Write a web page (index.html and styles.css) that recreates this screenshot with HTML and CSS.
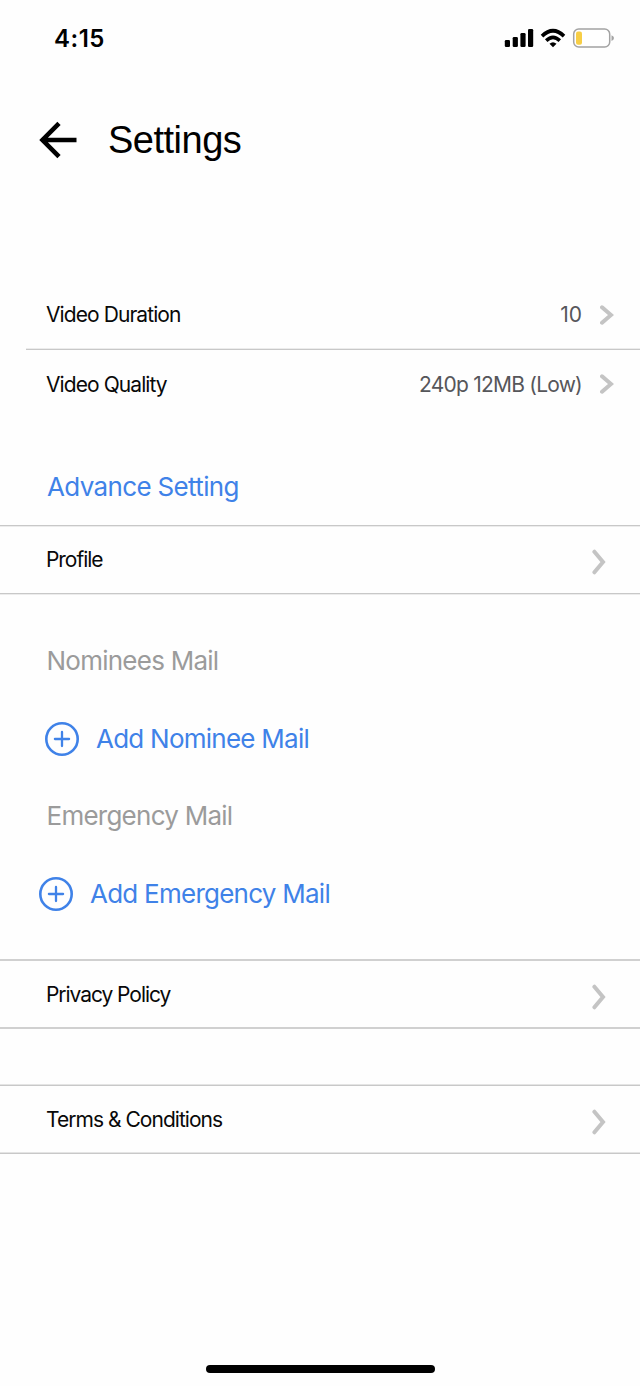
FILE: index.html
```html
<!DOCTYPE html>
<html lang="en">
<head>
<meta charset="utf-8">
<title>Settings</title>
<link rel="stylesheet" href="styles.css">
</head>
<body>
<div class="screen">
  <div class="status">
    <span class="time">4:15</span>
    <svg class="status-icons" width="112" height="24" viewBox="0 0 112 24">
      <rect x="0.8" y="13" width="5.2" height="7" rx="1.3"/>
      <rect x="8.7" y="10" width="5.2" height="10" rx="1.3"/>
      <rect x="16.4" y="6" width="5.2" height="14" rx="1.3"/>
      <rect x="24" y="2" width="5.2" height="18" rx="1.3"/>
      <g fill="none" stroke="#000" stroke-width="3.6">
        <path d="M38 9.1 Q49 -1.6 60 9.1"/>
        <path d="M42.2 13.6 Q49 7.2 55.8 13.6"/>
      </g>
      <path d="M45.5 16.7 Q49 13.6 52.5 16.7 L49 20.2Z"/>
      <rect x="69.7" y="2" width="36" height="18" rx="5" fill="#fff" stroke="#a3a3a3" stroke-width="1.5"/>
      <rect x="72" y="4.4" width="6" height="13.4" rx="2" fill="#f7ce46"/>
      <path d="M107.5 8.2 Q110 9 110 11.1 Q110 13.2 107.5 14Z" fill="#a3a3a3"/>
    </svg>
  </div>
  <header class="header">
    <svg width="40" height="40" viewBox="0 0 40 40" fill="none" stroke="#000" stroke-width="4.6"><path d="M38.5 20H4M21 3.3L4.5 20L21 36.7"/></svg>
    <h1>Settings</h1>
  </header>
  <section class="video">
    <div class="row first"><span class="t-duration">Video Duration</span><span class="value v-num">10</span>
      <svg class="chev" width="14" height="20" viewBox="0 0 14 20"><path d="M2 2.3L11 10L2 17.7"/></svg></div>
    <div class="row"><span class="t-quality">Video Quality</span><span class="value v-quality">240p 12MB (Low)</span>
      <svg class="chev" width="14" height="20" viewBox="0 0 14 20"><path d="M2 2.3L11 10L2 17.7"/></svg></div>
  </section>
  <h2 class="advance">Advance Setting</h2>
  <div class="link-row"><span class="t-profile">Profile</span>
    <svg class="chev-lg" width="14" height="26" viewBox="0 0 14 26"><path d="M2.4 2.7L11 13L2.4 23.3"/></svg></div>
  <section class="mail">
    <h3 class="t-nominees">Nominees Mail</h3>
    <div class="add nominee">
      <svg width="34" height="34" viewBox="0 0 34 34"><circle cx="17" cy="17" r="15.7"/><path d="M17 9.9V24.1M9.9 17H24.1"/></svg>
      <span>Add Nominee Mail</span></div>
    <h3 class="t-emergency">Emergency Mail</h3>
    <div class="add emergency">
      <svg width="34" height="34" viewBox="0 0 34 34"><circle cx="17" cy="17" r="15.7"/><path d="M17 9.9V24.1M9.9 17H24.1"/></svg>
      <span>Add Emergency Mail</span></div>
  </section>
  <div class="link-row privacy"><span class="t-privacy">Privacy Policy</span>
    <svg class="chev-lg" width="14" height="26" viewBox="0 0 14 26"><path d="M2.4 2.7L11 13L2.4 23.3"/></svg></div>
  <div class="link-row terms"><span class="t-terms">Terms &amp; Conditions</span>
    <svg class="chev-lg" width="14" height="26" viewBox="0 0 14 26"><path d="M2.4 2.7L11 13L2.4 23.3"/></svg></div>
  <div class="home"></div>
</div>
</body>
</html>
```
FILE: styles.css
```css
* { box-sizing: border-box; }
body { margin: 0; background: #fff; color: #090909; font-family: Inter, "Liberation Sans", sans-serif; }
h1, h2, h3 { margin: 0; font-weight: 400; }
svg { display: block; flex: none; }
.screen { width: 640px; height: 1386px; display: flex; flex-direction: column; background: #fefefe; overflow: hidden; white-space: nowrap; }
.status { height: 77px; flex: none; display: flex; justify-content: space-between; padding: 0 24px 0 54px; align-items: center; }
.time { font-size: 24px; font-weight: 600; letter-spacing: 0.5px; color: #000; }
.header { height: 126px; flex: none; display: flex; align-items: center; padding-left: 38px; gap: 30px; color: #000; }
.header h1 { font: 400 38px/42px "Liberation Sans", sans-serif; letter-spacing: -0.5px; }
.video { margin-top: 77px; flex: none; }
.row { height: 68px; margin-left: 26px; padding: 0 26px 0 20px; display: flex; align-items: center; font-size: 21px; letter-spacing: -0.92px; }
.row.first { height: 70px; border-bottom: 1px solid #c8c8c8; box-shadow: inset 0 -1px #ececec; }
.value { margin-left: auto; margin-right: 18px; color: #56565a; }
.v-num { letter-spacing: 0; }
.v-quality { letter-spacing: -0.77px; }
.chev path, .chev-lg path { fill: none; stroke: #c4c4c4; stroke-width: 4; stroke-linecap: round; stroke-linejoin: miter; }
.advance { height: 106px; flex: none; padding: 53px 0 0 47px; font-size: 26px; line-height: 32px; letter-spacing: -0.65px; color: #3f82e8; }
.link-row { height: 69px; flex: none; margin-top: 1px; padding: 0 34px 0 46px; display: flex; align-items: center; justify-content: space-between; border: solid #c8c8c8; border-width: 1px 0; box-shadow: inset 0 1px #ececec, 0 1px #ececec; font-size: 21px; letter-spacing: -1.05px; }
.chev-lg { margin-top: 5px; }
.mail { height: 365px; flex: none; padding-top: 51px; font-size: 26px; line-height: 32px; letter-spacing: -0.75px; }
.mail h3 { font-size: 26px; padding-left: 46.5px; color: #9b9b9b; }
.add { display: flex; align-items: center; gap: 17px; height: 34px; margin: 45px 0 44px; padding-left: 45px; color: #3f82e8; }
.add.emergency { padding-left: 39px; }
.add path, .add circle { fill: none; stroke: #3f82e8; stroke-width: 2.6; stroke-linecap: round; }
.add path { stroke-width: 2.3; }
.privacy { margin-top: 0; height: 70px; border-width: 2px 0; border-color: #d0d0d0; box-shadow: none; }
.terms { margin-top: 56px; letter-spacing: -0.97px; box-shadow: 0 -1px #e4e4e4, inset 0 -1px #e4e4e4; }
.home { width: 229px; height: 8px; border-radius: 4px; background: #000; margin: auto auto 13px; }
```
